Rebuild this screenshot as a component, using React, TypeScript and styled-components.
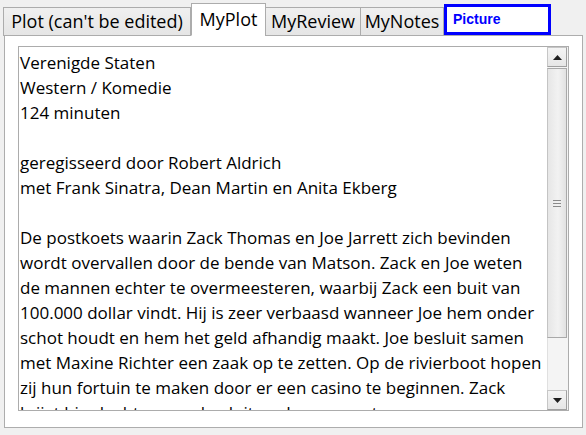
import React from "react"
import styled, { createGlobalStyle } from "styled-components"

const GlobalStyle = createGlobalStyle`
  html, body {
    margin: 0;
    padding: 0;
    background: #f0f0f0;
    width: 586px;
    height: 435px;
    overflow: hidden;
  }
`

const Screen = styled.div`
  width: 586px;
  height: 435px;
  display: flex;
  flex-direction: column;
  font-family: "Open Sans", "Noto Sans", sans-serif;
`

const TabStrip = styled.div`
  display: flex;
  align-items: flex-end;
  height: 36px;
  padding-left: 3px;
  position: relative;
  z-index: 1;
  margin-bottom: -1px;
`

const Tab = styled.div<{ $active?: boolean; $width: number }>`
  box-sizing: border-box;
  width: ${p => p.$width}px;
  height: ${p => (p.$active ? 33 : 29)}px;
  display: flex;
  align-items: center;
  justify-content: center;
  font-size: 18px;
  white-space: nowrap;
  color: #000;
  background: ${p =>
    p.$active ? "#fff" : "linear-gradient(#f0f0f0, #e5e5e5)"};
  border: 1px solid #acacac;
  border-bottom: 1px solid ${p => (p.$active ? "#fff" : "#acacac")};
  margin-left: ${p => (p.$active ? 0 : -1)}px;
  padding-bottom: 1px;
  &:first-child {
    margin-left: 0;
  }
`

const PictureTab = styled.div`
  box-sizing: border-box;
  width: 107px;
  height: 31px;
  margin-bottom: 1px;
  border: 3px solid #0000ff;
  background: #fff;
  color: #0000ff;
  font-family: "Liberation Sans", Arial, sans-serif;
  font-weight: bold;
  font-size: 14px;
  display: flex;
  align-items: center;
  padding-left: 6px;
  padding-bottom: 2px;
`

const Panel = styled.div`
  box-sizing: border-box;
  margin: 0 3px 0 4px;
  height: 393px;
  background: #fff;
  border: 1px solid #adadad;
  padding: 10px 13px 0 13px;
`

const Memo = styled.div`
  box-sizing: border-box;
  height: 365px;
  width: 551px;
  border: 1px solid #acacac;
  display: flex;
`

const MemoText = styled.div`
  flex: 1;
  overflow: hidden;
  white-space: pre;
  padding: 3px 0 0 1px;
  font-size: 17px;
  line-height: 25px;
  color: #000;
`

const ScrollBar = styled.div`
  width: 21px;
  display: flex;
  flex-direction: column;
  background: #f4f4f4;
`

const ArrowButton = styled.div`
  box-sizing: border-box;
  height: 20px;
  margin: 0 1px 0 0;
  background: linear-gradient(#f4f4f4, #e6e6e6);
  border: 1px solid #c6c6c6;
  border-right-color: #a0a0a0;
  border-bottom-color: #a0a0a0;
  display: flex;
  align-items: center;
  justify-content: center;
`

const Thumb = styled.div`
  height: 270px;
  margin: 1px 1px 0 0;
  box-sizing: border-box;
  background: linear-gradient(90deg, #e6e6e6, #f2f2f2 55%, #e2e2e2);
  border: 1px solid #a9a9a9;
  border-left-color: #c4c4c4;
  display: flex;
  flex-direction: column;
  align-items: center;
  justify-content: center;
  gap: 2px;
`

const Track = styled.div`
  flex: 1;
  border-left: 1px solid #e0e0e0;
`

const Grip = styled.span`
  width: 8px;
  height: 1px;
  background: #8a8a8a;
`

const Arrow = ({ down }: { down?: boolean }) => (
  <svg width="9" height="5" viewBox="0 0 9 5">
    <path
      d={down ? "M0 0 L9 0 L4.5 5 Z" : "M0 5 L9 5 L4.5 0 Z"}
      fill="#1e1e1e"
    />
  </svg>
)

const plot = `Verenigde Staten
Western / Komedie
124 minuten

geregisseerd door Robert Aldrich
met Frank Sinatra, Dean Martin en Anita Ekberg

De postkoets waarin Zack Thomas en Joe Jarrett zich bevinden
wordt overvallen door de bende van Matson. Zack en Joe weten
de mannen echter te overmeesteren, waarbij Zack een buit van
100.000 dollar vindt. Hij is zeer verbaasd wanneer Joe hem onder
schot houdt en hem het geld afhandig maakt. Joe besluit samen
met Maxine Richter een zaak op te zetten. Op de rivierboot hopen
zij hun fortuin te maken door er een casino te beginnen. Zack
krijgt hier lucht van en besluit ze daarom op te sporen.`

const App: React.FC = () => {
  return (
    <Screen>
      <GlobalStyle />
      <TabStrip>
        <Tab $width={188}>Plot (can't be edited)</Tab>
        <Tab $width={75} $active>
          MyPlot
        </Tab>
        <Tab $width={96}>MyReview</Tab>
        <Tab $width={84}>MyNotes</Tab>
        <PictureTab>Picture</PictureTab>
      </TabStrip>
      <Panel>
        <Memo>
          <MemoText>{plot}</MemoText>
          <ScrollBar>
            <ArrowButton>
              <Arrow />
            </ArrowButton>
            <Thumb>
              <Grip />
              <Grip />
              <Grip />
            </Thumb>
            <Track />
            <ArrowButton>
              <Arrow down />
            </ArrowButton>
          </ScrollBar>
        </Memo>
      </Panel>
    </Screen>
  )
}

export default App
